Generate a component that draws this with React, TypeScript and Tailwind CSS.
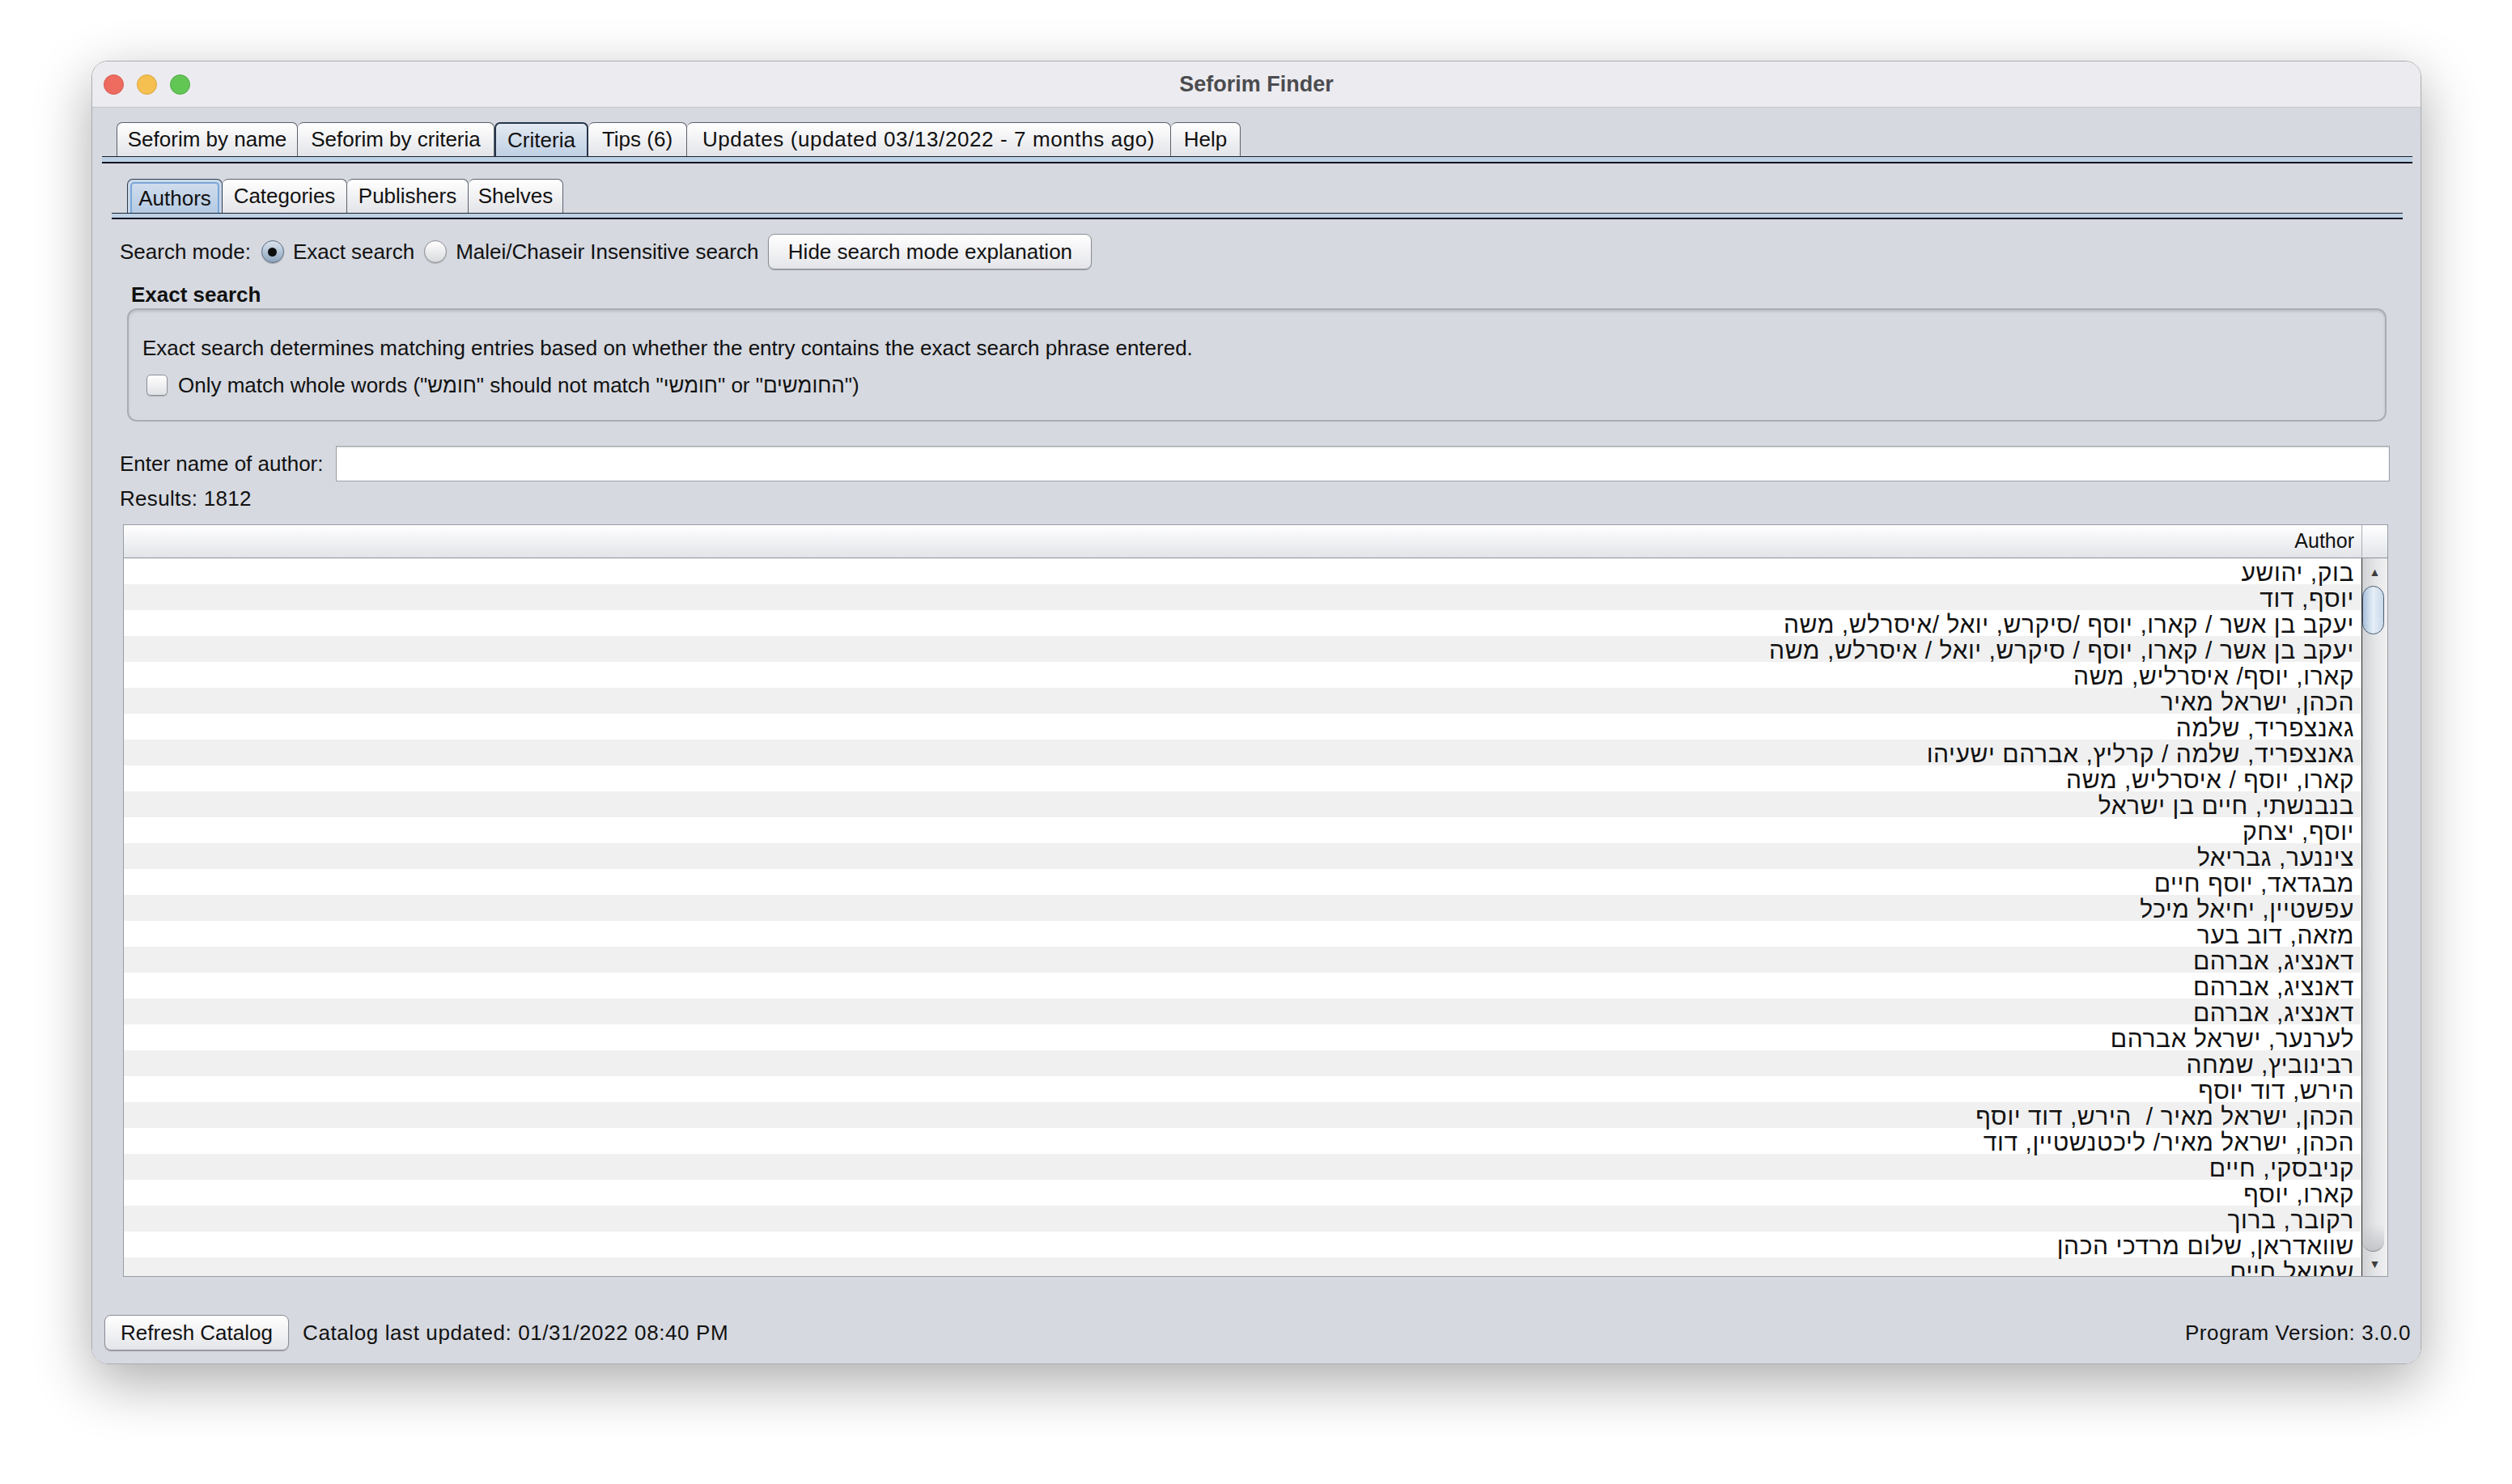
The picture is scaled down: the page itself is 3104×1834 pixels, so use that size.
import React from 'react';

const authors = [
  'בוק, יהושע',
  'יוסף, דוד',
  'יעקב בן אשר / קארו, יוסף /סיקרש, יואל /איסרלש, משה',
  'יעקב בן אשר / קארו, יוסף / סיקרש, יואל / איסרלש, משה',
  'קארו, יוסף/ איסרליש, משה',
  'הכהן, ישראל מאיר',
  'גאנצפריד, שלמה',
  'גאנצפריד, שלמה / קרליץ, אברהם ישעיהו',
  'קארו, יוסף / איסרליש, משה',
  'בנבנשתי, חיים בן ישראל',
  'יוסף, יצחק',
  'ציננער, גבריאל',
  'מבגדאד, יוסף חיים',
  'עפשטיין, יחיאל מיכל',
  'מזאה, דוב בער',
  'דאנציג, אברהם',
  'דאנציג, אברהם',
  'דאנציג, אברהם',
  'לערנער, ישראל אברהם',
  'רבינוביץ, שמחה',
  'הירש, דוד יוסף',
  'הכהן, ישראל מאיר /  הירש, דוד יוסף',
  'הכהן, ישראל מאיר/ ליכטנשטיין, דוד',
  'קניבסקי, חיים',
  'קארו, יוסף',
  'רקובר, ברוך',
  'שוואדראן, שלום מרדכי הכהן',
  'שמואל חיים',
];

function Band({ thick }: { thick?: boolean }) {
  return (
    <div
      className={
        thick
          ? 'h-[9px] border-t border-[#1b2330] bg-[#bdd1e5] border-b-2 border-b-[#0b1220]'
          : 'h-[8px] border-t border-[#1b2330] bg-[#bdd1e5] border-b-2 border-b-[#0b1220]'
      }
    />
  );
}

function Radio({ checked }: { checked?: boolean }) {
  if (checked) {
    return (
      <span className="w-[28px] h-[28px] shrink-0 rounded-full border border-[#5b6d84] bg-linear-to-b from-[#dbe4ee] to-[#8ea5bf] flex items-center justify-center shadow-[0_1px_1px_rgba(0,0,0,0.25)]">
        <span className="w-[11px] h-[11px] rounded-full bg-[#0d0d0d]" />
      </span>
    );
  }
  return (
    <span className="block w-[28px] h-[28px] shrink-0 rounded-full border border-[#8a8d94] bg-linear-to-b from-white to-[#d9dadd] shadow-[0_1px_1px_rgba(0,0,0,0.2)]" />
  );
}

const tab =
  'h-[42px] border border-b-0 border-l-0 border-[#5b606b] rounded-t-[7px] bg-linear-to-b from-white to-[#e3e4e8] flex items-center justify-center';

export default function App() {
  return (
    <div className="w-[3104px] h-[1834px] bg-white pt-[75px] pl-[113px] font-['Liberation_Sans',Arial,sans-serif] text-[26px] text-[#111]">
      <div className="w-[2879px] h-[1611px] rounded-[20px] overflow-hidden flex flex-col border border-[#adadb1] shadow-[0_22px_70px_rgba(0,0,0,0.33)]">
        {/* title bar */}
        <div className="h-[57px] shrink-0 bg-[#ecebf0] border-b border-[#c5c5c9] grid grid-cols-[1fr_auto_1fr] items-center">
          <div className="flex items-center gap-[16px] pl-[14px]">
            <span className="w-[25px] h-[25px] rounded-full bg-[#ee6b60] border border-[#d65a4f]" />
            <span className="w-[25px] h-[25px] rounded-full bg-[#f5c04f] border border-[#d9a53d]" />
            <span className="w-[25px] h-[25px] rounded-full bg-[#62c655] border border-[#4fa944]" />
          </div>
          <div className="text-[27px] font-bold text-[#4b4b4f]">Seforim Finder</div>
          <div />
        </div>

        <div className="flex-1 bg-[#d6d9e0] flex flex-col">
          {/* main tab pane */}
          <div className="ml-[12px] mr-[10px] mt-[18px]">
            <div className="flex h-[42px] pl-[18px]">
              <div className="w-[224px] h-[42px] border border-b-0 border-[#5b606b] rounded-t-[7px] bg-linear-to-b from-white to-[#e3e4e8] flex items-center justify-center">Seforim by name</div>
              <div className={`w-[243px] ${tab}`}>Seforim by criteria</div>
              <div className="w-[116px] h-[42px] border-2 border-b-0 border-[#26354a] rounded-t-[7px] bg-linear-to-b from-[#e3eaf2] to-[#bfd0e3] flex items-center justify-center">Criteria</div>
              <div className={`w-[122px] ${tab}`}>Tips (6)</div>
              <div className={`w-[598px] ${tab} tracking-[0.6px]`}>Updates (updated 03/13/2022 - 7 months ago)</div>
              <div className={`w-[86px] ${tab}`}>Help</div>
            </div>
            <Band thick />

            {/* sub tab pane */}
            <div className="mx-[12px]">
              <div className="flex h-[42px] pl-[19px] mt-[19px]">
                <div className="w-[118px] h-[42px] border border-b-0 border-[#2d3b4e] rounded-t-[7px] p-[3px] pb-0 bg-[#c9d8e9]">
                  <div className="h-full rounded-t-[5px] border-2 border-b-0 border-[#79a6d8] bg-linear-to-b from-[#cfdcec] to-[#b5cbe4] flex items-center justify-center">Authors</div>
                </div>
                <div className={`w-[154px] ${tab}`}>Categories</div>
                <div className={`w-[150px] ${tab}`}>Publishers</div>
                <div className={`w-[117px] ${tab}`}>Shelves</div>
              </div>
              <Band />

              <div className="pl-[10px] pr-[16px]">
                {/* search mode */}
                <div className="mt-[18px] h-[44px] flex items-center">
                  <span>Search mode:</span>
                  <span className="ml-[13px]"><Radio checked /></span>
                  <span className="ml-[11px]">Exact search</span>
                  <span className="ml-[12px]"><Radio /></span>
                  <span className="ml-[11px]">Malei/Chaseir Insensitive search</span>
                  <button className="ml-[12px] w-[400px] h-[44px] rounded-[8px] border border-[#8b8e96] bg-linear-to-b from-white to-[#e4e5e9] shadow-[0_1px_1px_rgba(0,0,0,0.25)] text-[26px] text-[#111]">
                    Hide search mode explanation
                  </button>
                </div>

                <div className="mt-[16px] h-[30px] flex items-center ml-[14px] font-bold">Exact search</div>

                {/* explanation box */}
                <div className="mt-[2px] ml-[9px] mr-[4px] h-[140px] rounded-[12px] border-2 border-[#aaadb4] shadow-[inset_0_2px_3px_rgba(0,0,0,0.12)] pl-[17px] pt-[32px]">
                  <div className="h-[30px] flex items-center">
                    Exact search determines matching entries based on whether the entry contains the exact search phrase entered.
                  </div>
                  <div className="mt-[16px] h-[30px] flex items-center">
                    <span className="ml-[5px] w-[26px] h-[26px] rounded-[5px] border border-[#8d9098] bg-linear-to-b from-white to-[#e1e2e6] shadow-[0_1px_1px_rgba(0,0,0,0.2)]" />
                    <span className="ml-[13px]">Only match whole words ("חומש" should not match "חומשי" or "החומשים")</span>
                  </div>
                </div>

                {/* author field */}
                <div className="mt-[30px] h-[44px] flex items-center">
                  <span>Enter name of author:</span>
                  <div className="ml-[16px] flex-1 h-[44px] bg-white border border-[#9ea2a9] shadow-[inset_0_1px_2px_rgba(0,0,0,0.18)]" />
                </div>

                <div className="mt-[6px] h-[30px] flex items-center tracking-[0.3px]">Results: 1812</div>

                {/* table */}
                <div className="mt-[17px] ml-[4px] mr-[2px] h-[930px] border border-[#989ca4] flex flex-col bg-white">
                  <div className="h-[41px] shrink-0 flex border-b border-[#8e929a] bg-linear-to-b from-white to-[#e2e4e9]">
                    <div className="flex-1 flex items-center justify-end pr-[9px] text-[25px]">Author</div>
                    <div className="w-[32px] border-l border-[#a9acb2]" />
                  </div>
                  <div className="flex-1 flex overflow-hidden">
                    <div className="flex-1 border-r border-[#2b2b2b] overflow-hidden">
                      {authors.map((a, i) => (
                        <div
                          key={i}
                          dir="rtl"
                          className={
                            i % 2 === 0
                              ? 'h-[32px] bg-white text-right pr-[9px] pt-[3px] text-[30px] leading-[29px] tracking-[0.6px] whitespace-pre'
                              : 'h-[32px] bg-[#f0f0f0] text-right pr-[9px] pt-[3px] text-[30px] leading-[29px] tracking-[0.6px] whitespace-pre'
                          }
                        >
                          {a}
                        </div>
                      ))}
                    </div>
                    <div className="w-[31px] flex flex-col bg-linear-to-r from-[#cfd0d3] via-[#e4e5e7] to-[#f1f1f2]">
                      <div className="h-[34px] flex items-center justify-center text-[14px] text-[#3d3d3d]">▲</div>
                      <div className="h-[60px] w-[27px] rounded-full border border-[#4d5c70] bg-linear-to-r from-[#a8c1db] via-[#e6eef7] to-[#c8d8e9]" />
                      <div className="flex-1" />
                      <div className="h-[34px] w-[27px] rounded-b-full border-b border-[#8a8d93] bg-linear-to-b from-transparent to-[#c3c5c9]" />
                      <div className="h-[30px] flex items-center justify-center text-[14px] text-[#3d3d3d]">▼</div>
                    </div>
                  </div>
                </div>
              </div>
            </div>
          </div>

          {/* footer */}
          <div className="mt-[47px] h-[44px] flex items-center pl-[15px] pr-[12px]">
            <button className="w-[228px] h-[44px] rounded-[8px] border border-[#8b8e96] bg-linear-to-b from-white to-[#e4e5e9] shadow-[0_1px_1px_rgba(0,0,0,0.25)] text-[26px] text-[#111]">
              Refresh Catalog
            </button>
            <span className="ml-[17px] tracking-[0.6px]">Catalog last updated: 01/31/2022 08:40 PM</span>
            <span className="ml-auto tracking-[0.6px]">Program Version: 3.0.0</span>
          </div>
        </div>
      </div>
    </div>
  );
}
